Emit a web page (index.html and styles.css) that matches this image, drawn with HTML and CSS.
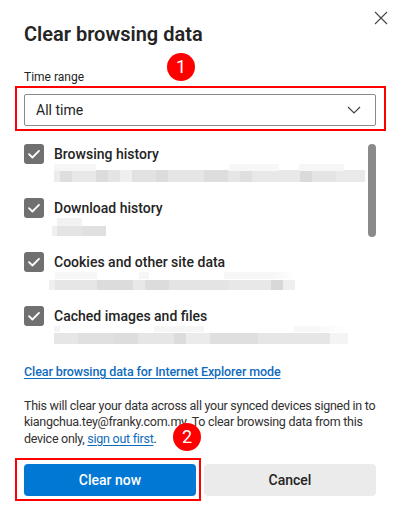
FILE: index.html
```html
<!DOCTYPE html>
<html lang="en">
<head>
<meta charset="utf-8">
<title>Clear browsing data</title>
<link rel="stylesheet" href="styles.css">
</head>
<body>
<div class="dialog">
  <div class="header">
    <h1 class="title">Clear browsing data</h1>
    <button class="close" aria-label="Close">
      <svg width="14" height="14" viewBox="0 0 14 14"><path d="M1 1L13 13M13 1L1 13" stroke="#444" stroke-width="1.1" fill="none"/></svg>
    </button>
  </div>
  <div class="field-label">Time range</div>
  <div class="select">
    <span class="select-value">All time</span>
    <svg class="chevron" width="14" height="8" viewBox="0 0 14 8"><path d="M1 1L7 7L13 1" stroke="#444" stroke-width="1.2" fill="none"/></svg>
  </div>
  <div class="list">
    <div class="items">
      <div class="item">
        <span class="checkbox"><svg width="20" height="20" viewBox="0 0 20 20"><path d="M5 10.2L8.4 13.5L15 6.8" stroke="#fff" stroke-width="1.8" fill="none" stroke-linecap="round" stroke-linejoin="round"/></svg></span>
        <div class="item-text">
          <div class="item-label">Browsing history</div>
          <div class="blur blur-1"></div>
        </div>
      </div>
      <div class="item">
        <span class="checkbox"><svg width="20" height="20" viewBox="0 0 20 20"><path d="M5 10.2L8.4 13.5L15 6.8" stroke="#fff" stroke-width="1.8" fill="none" stroke-linecap="round" stroke-linejoin="round"/></svg></span>
        <div class="item-text">
          <div class="item-label">Download history</div>
          <div class="blur blur-2"></div>
        </div>
      </div>
      <div class="item">
        <span class="checkbox"><svg width="20" height="20" viewBox="0 0 20 20"><path d="M5 10.2L8.4 13.5L15 6.8" stroke="#fff" stroke-width="1.8" fill="none" stroke-linecap="round" stroke-linejoin="round"/></svg></span>
        <div class="item-text">
          <div class="item-label">Cookies and other site data</div>
          <div class="blur blur-3"></div>
        </div>
      </div>
      <div class="item">
        <span class="checkbox"><svg width="20" height="20" viewBox="0 0 20 20"><path d="M5 10.2L8.4 13.5L15 6.8" stroke="#fff" stroke-width="1.8" fill="none" stroke-linecap="round" stroke-linejoin="round"/></svg></span>
        <div class="item-text">
          <div class="item-label">Cached images and files</div>
          <div class="blur blur-4"></div>
        </div>
      </div>
    </div>
    <div class="scrollbar"><div class="thumb"></div></div>
  </div>
  <a class="link ie-link" href="#">Clear browsing data for Internet Explorer mode</a>
  <p class="note">This will clear your data across all your synced devices signed in to<br>kiangchua.tey@franky.com.my. To clear browsing data from this<br>device only, <a class="link" href="#">sign out first</a>.</p>
  <div class="actions">
    <button class="btn btn-primary">Clear now</button>
    <button class="btn btn-secondary">Cancel</button>
  </div>

  <div class="mark mark-box-1"></div>
  <div class="mark mark-box-2"></div>
  <div class="badge badge-1">1</div>
  <div class="badge badge-2">2</div>
</div>
</body>
</html>
```

FILE: styles.css
```css
* { box-sizing: border-box; }
html, body { margin: 0; padding: 0; background: #ffffff; }
body {
  font-family: Roboto, "Noto Sans", "Liberation Sans", sans-serif;
  color: #242424;
}
.dialog {
  position: relative;
  width: 400px;
  height: 521px;
  padding: 0 24px;
  background: #fff;
  overflow: hidden;
}
.header {
  display: flex;
  justify-content: space-between;
  align-items: flex-start;
  padding-top: 10px;
}
.title {
  margin: 10px 0 0 0;
  font-size: 20px;
  line-height: 28px;
  font-weight: 600;
  color: #242424;
}
.close {
  margin-right: -13px;
  width: 16px;
  height: 16px;
  padding: 1px;
  border: 0;
  background: transparent;
  display: flex;
  align-items: center;
  justify-content: center;
}
.field-label {
  margin-top: 21px;
  font-size: 12px;
  line-height: 16px;
  color: #242424;
}
.select {
  margin-top: 9px;
  height: 32px;
  border: 1px solid #8a8a8a;
  border-radius: 2px;
  display: flex;
  align-items: center;
  justify-content: space-between;
  padding: 0 14px 0 11px;
}
.select-value { font-size: 14px; color: #242424; }
.list {
  margin-top: 18px;
  display: flex;
}
.items { flex: 1; }
.item {
  display: grid;
  grid-template-columns: 20px 1fr;
  column-gap: 10px;
  height: 54px;
}
.checkbox {
  width: 20px;
  height: 20px;
  border-radius: 3px;
  background: #707070;
  display: block;
}
.checkbox svg { display: block; }
.item-label {
  font-size: 14px;
  line-height: 20px;
  font-weight: 500;
  color: #242424;
}
.blur { height: 18px; }
.blur-1 {
  width: 311px;
  background:
    linear-gradient(90deg, #f6f6f6 0 42px, transparent 42px 175px, #f7f7f7 175px 225px, transparent 225px 245px, #f6f6f6 245px 290px, transparent 290px) top/100% 7px no-repeat,
    linear-gradient(90deg, #ececec 0 6px, #dedede 6px 18px, #e8e8e8 18px 42px, #dcdcdc 42px 54px, #e4e4e4 54px 66px, #efefef 66px 78px, #e2e2e2 78px 102px, #dcdcdc 102px 114px, #e6e6e6 114px 150px, #dddddd 150px 174px, #e6e6e6 174px 186px, #dfdfdf 186px 198px, #e8e8e8 198px 246px, #dadada 246px 258px, #e4e4e4 258px 282px, #e9e9e9 282px 311px) bottom/100% 12px no-repeat;
}
.blur-2 {
  margin-left: -2px;
  width: 54px;
  background:
    linear-gradient(90deg, transparent 0 5px, #f2f2f2 5px 30px, transparent 30px) top/100% 8px no-repeat,
    linear-gradient(90deg, #f0f0f0 0 5px, #e4e4e4 5px 30px, #e0e0e0 30px 54px) bottom/100% 10px no-repeat;
}
.blur-3 {
  margin-left: -5px;
  width: 246px;
  background:
    linear-gradient(90deg, transparent 0 6px, #f7f7f7 6px 48px, transparent 48px 90px, #f6f6f6 90px 100px, transparent 100px 175px, #f7f7f7 175px 225px, transparent) top/100% 7px no-repeat,
    linear-gradient(90deg, #efefef 0 6px, #e6e6e6 6px 48px, #dcdcdc 48px 84px, #e8e8e8 84px 96px, #dcdcdc 96px 120px, #e4e4e4 120px 180px, #e8e8e8 180px 222px, #d8d8d8 222px 234px, #efefef 234px 246px) bottom/100% 10px no-repeat;
}
.blur-4 {
  width: 294px;
  background:
    linear-gradient(90deg, #f4f4f4 0 6px, transparent 6px 100px, #f6f6f6 100px 150px, transparent 150px 240px, #f7f7f7 240px 260px, transparent) top/100% 6px no-repeat,
    linear-gradient(90deg, #e6e6e6 0 24px, #e0e0e0 24px 60px, #dddddd 60px 84px, #e6e6e6 84px 120px, #dcdcdc 120px 132px, #ebebeb 132px 156px, #dfdfdf 156px 204px, #e6e6e6 204px 276px, #f4f4f4 276px 294px) bottom/100% 11px no-repeat;
}
.scrollbar {
  width: 8px;
  padding-top: 0;
}
.thumb {
  width: 8px;
  height: 93px;
  border-radius: 4px;
  background: #8a8a8a;
}
.link {
  color: #0f6cbd;
  text-decoration: underline;
  text-underline-offset: 2px;
}
.ie-link {
  display: block;
  margin-top: 3px;
  font-size: 12.5px;
  line-height: 18px;
  font-weight: 500;
  letter-spacing: -0.1px;
}
.note {
  margin: 17px 0 0 0;
  font-size: 12.5px;
  line-height: 16.3px;
  letter-spacing: -0.27px;
  color: #323130;
  white-space: nowrap;
}
.actions {
  margin-top: 17px;
  display: grid;
  grid-template-columns: 1fr 1fr;
  column-gap: 8px;
}
.btn {
  height: 32px;
  border: 0;
  border-radius: 4px;
  font-family: inherit;
  font-size: 14px;
  font-weight: 500;
}
.btn-primary { background: #0078d4; color: #fff; }
.btn-secondary { background: #ebebeb; color: #242424; }

.mark {
  position: absolute;
  border: 2px solid #ff0000;
  pointer-events: none;
}
.mark-box-1 { left: 15px; top: 86px; width: 371px; height: 45px; }
.mark-box-2 { left: 15px; top: 458px; width: 186px; height: 43px; }
.badge {
  position: absolute;
  width: 28px;
  height: 28px;
  border-radius: 50%;
  background: #ff0000;
  color: #fff;
  font-size: 18px;
  line-height: 28px;
  text-align: center;
}
.badge-1 { left: 167px; top: 53px; }
.badge-2 { left: 173px; top: 423px; }
```
